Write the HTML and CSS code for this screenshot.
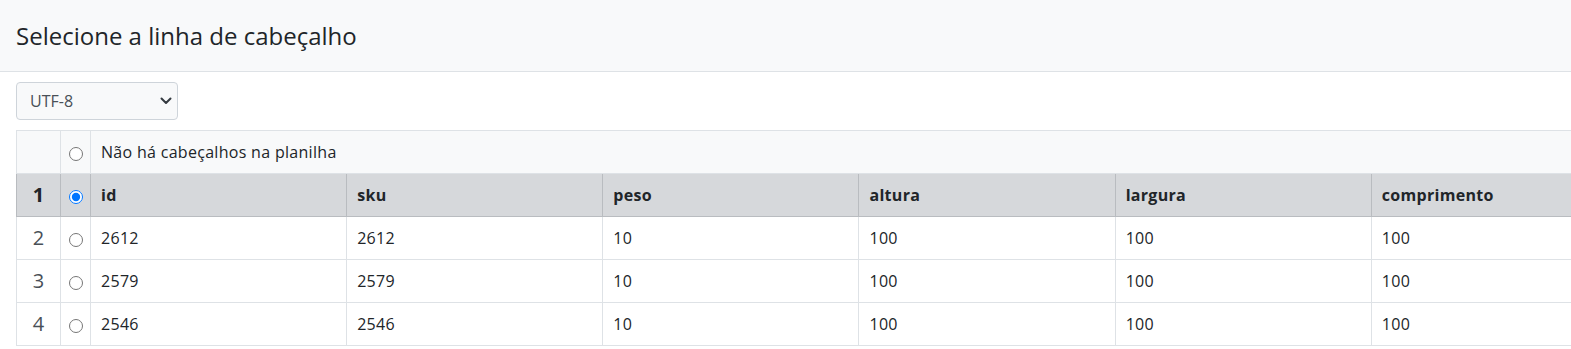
FILE: index.html
```html
<!DOCTYPE html>
<html lang="pt-BR">
<head>
    <meta charset="UTF-8">
    <meta name="viewport" content="width=device-width, initial-scale=1.0">
    <title>Selecione a linha de cabeçalho</title>
    <link rel="stylesheet" href="styles.css">
</head>
<body>
    <div class="modal">
        <div class="modal-header">
            <h5 class="modal-title">Selecione a linha de cabeçalho</h5>
        </div>

        <div class="modal-body">
            <div class="select-wrap">
                <select class="form-select" id="encoding">
                    <option>UTF-8</option>
                    <option>ISO-8859-1</option>
                </select>
                <svg class="select-arrow" width="12" height="8" viewBox="0 0 12 8">
                    <path d="M1.5 1.5l4.5 4.5 4.5-4.5" fill="none" stroke="#343a40" stroke-width="2" stroke-linecap="round" stroke-linejoin="round"/>
                </svg>
            </div>

            <div class="table-wrap">
                <table class="sheet">
                    <colgroup>
                        <col class="col-num">
                        <col class="col-radio">
                        <col><col><col><col><col><col>
                    </colgroup>
                    <tbody>
                        <tr class="row-none">
                            <td class="num"></td>
                            <td class="pick"><input type="radio" name="headerRow" value="0"></td>
                            <td colspan="6">Não há cabeçalhos na planilha</td>
                        </tr>
                        <tr class="row-head">
                            <td class="num">1</td>
                            <td class="pick"><input type="radio" name="headerRow" value="1" checked></td>
                            <td>id</td>
                            <td>sku</td>
                            <td>peso</td>
                            <td>altura</td>
                            <td>largura</td>
                            <td>comprimento</td>
                        </tr>
                        <tr>
                            <td class="num">2</td>
                            <td class="pick"><input type="radio" name="headerRow" value="2"></td>
                            <td>2612</td>
                            <td>2612</td>
                            <td>10</td>
                            <td>100</td>
                            <td>100</td>
                            <td>100</td>
                        </tr>
                        <tr>
                            <td class="num">3</td>
                            <td class="pick"><input type="radio" name="headerRow" value="3"></td>
                            <td>2579</td>
                            <td>2579</td>
                            <td>10</td>
                            <td>100</td>
                            <td>100</td>
                            <td>100</td>
                        </tr>
                        <tr>
                            <td class="num">4</td>
                            <td class="pick"><input type="radio" name="headerRow" value="4"></td>
                            <td>2546</td>
                            <td>2546</td>
                            <td>10</td>
                            <td>100</td>
                            <td>100</td>
                            <td>100</td>
                        </tr>
                    </tbody>
                </table>
            </div>
        </div>
    </div>
</body>
</html>
```

FILE: styles.css
```css
:root {
    --text-color: #212529;
    --muted-color: #495057;
    --border-color: #dee2e6;
    --light-bg: #f8f9fa;
    --head-bg: #d6d8db;
    --head-border: #b9bcc0;
}

body {
    font-family: "Open Sans", "Noto Sans", sans-serif;
    margin: 0;
    padding: 0;
    color: var(--text-color);
    background-color: #fff;
    overflow: hidden;
}

.modal {
    width: 1571px;
    overflow: hidden;
}

.modal-header {
    height: 72px;
    display: flex;
    align-items: center;
    padding: 0 16px;
    background-color: var(--light-bg);
    border-bottom: 1px solid var(--border-color);
    box-sizing: border-box;
}

.modal-title {
    margin: 0;
    font-size: 24px;
    font-weight: 500;
    line-height: 28px;
}

.modal-body {
    padding: 10px 0 0 16px;
}

.select-wrap {
    position: relative;
    width: 162px;
    margin-bottom: 10px;
}

.form-select {
    appearance: none;
    -webkit-appearance: none;
    width: 100%;
    height: 38px;
    padding: 0 36px 0 13px;
    font-family: inherit;
    font-size: 16px;
    color: var(--muted-color);
    background-color: var(--light-bg);
    border: 1px solid #ced4da;
    border-radius: 4px;
    box-sizing: border-box;
}

.select-arrow {
    position: absolute;
    right: 6px;
    top: 15px;
    pointer-events: none;
}

.table-wrap {
    overflow: hidden;
}

.sheet {
    table-layout: fixed;
    width: 1612px;
    border-collapse: collapse;
    font-size: 16px;
    letter-spacing: 0.3px;
}

.col-num {
    width: 44px;
}

.col-radio {
    width: 30px;
}

.sheet td {
    border: 1px solid var(--border-color);
    padding: 9px 10px;
    line-height: 24px;
    white-space: nowrap;
}

.sheet td.num {
    padding: 9px 0;
    text-align: center;
    font-size: 20px;
    color: var(--muted-color);
}

.sheet td.pick {
    padding: 9px 0;
    text-align: center;
}

.sheet td.pick input {
    width: 14px;
    height: 14px;
    margin: 0;
    vertical-align: middle;
}

.row-none td {
    background-color: var(--light-bg);
    padding-top: 8px;
    padding-bottom: 9px;
}

.row-head td {
    background-color: var(--head-bg);
    border-color: var(--head-border);
    border-top-color: var(--border-color);
    font-weight: bold;
}

.row-head td.num {
    color: var(--text-color);
    font-weight: bold;
}
```
